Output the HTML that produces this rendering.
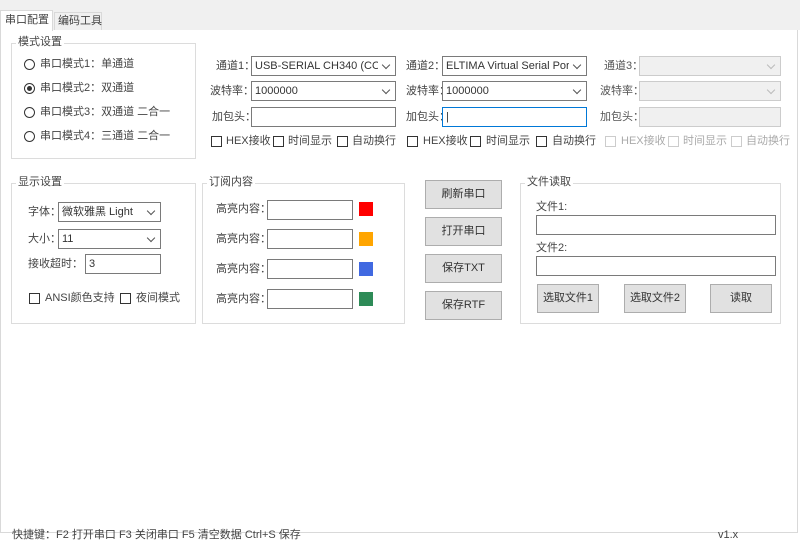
<!DOCTYPE html><html><head><meta charset="utf-8"><style>
*{box-sizing:border-box;margin:0;padding:0}
body{width:800px;height:533px;background:#fff;position:relative;overflow:hidden;font-family:"Liberation Sans","Noto Sans CJK SC",sans-serif;font-size:11px;line-height:13px;color:#444}
.a{position:absolute;white-space:nowrap}
.g{position:absolute;border:1px solid #dcdcdc}
.gt{position:absolute;background:#fff;padding:0 2px;top:-8px;left:4px;font-size:11px;color:#444}
.cb{position:absolute;border:1px solid #7a7a7a;background:#fff;height:20px;padding:2px 3px;font-size:11px;line-height:14px;color:#333;overflow:hidden;white-space:nowrap}
.cb.sel:before{content:"";position:absolute;right:0;top:0;width:17px;height:18px;background:inherit}
.cb.sel:after{content:"";position:absolute;right:6px;top:5px;width:5px;height:5px;border-right:1px solid #555;border-bottom:1px solid #555;transform:rotate(45deg)}
.dis{background:#f0f0f0;border-color:#ccc}
.dis:after{border-color:#bbb!important}
.ck{position:absolute;width:11px;height:11px;border:1px solid #333;background:#fff}
.ck.d{border-color:#ccc}
.rd{position:absolute;width:11px;height:11px;border:1px solid #333;border-radius:50%;background:#fff}
.bt{position:absolute;background:#e1e1e1;border:1px solid #adadad;text-align:center;font-size:11px;color:#333}
.sq{position:absolute;width:14px;height:14px}
.lg{color:#aaa}
</style></head><body>
<div class="a" style="left:0;top:0;width:800px;height:10px;background:#f0f0f0"></div>
<div class="a" style="left:0;top:10px;width:800px;height:20px;background:#f0f0f0"></div>
<div class="a" style="left:0;top:10px;width:53px;height:21px;background:#fff;border:1px solid #d9d9d9;border-bottom:none;padding:3px 4px">串口配置</div>
<div class="a" style="left:54px;top:12px;width:48px;height:18px;border:1px solid #d9d9d9;border-bottom:none;padding:2px 3px">编码工具</div>
<div class="a" style="left:0;top:30px;width:798px;height:503px;border:1px solid #d9d9d9;border-top:none"></div>

<div class="g" style="left:11px;top:43px;width:185px;height:116px"><span class="gt">模式设置</span></div>
<div class="rd" style="left:24px;top:59px"></div><div class="a" style="left:40px;top:58px">串口模式1：单通道</div>
<div class="rd" style="left:24px;top:83px"><div style="position:absolute;left:2px;top:2px;width:5px;height:5px;border-radius:50%;background:#333"></div></div><div class="a" style="left:40px;top:82px">串口模式2：双通道</div>
<div class="rd" style="left:24px;top:107px"></div><div class="a" style="left:40px;top:106px">串口模式3：双通道 二合一</div>
<div class="rd" style="left:24px;top:131px"></div><div class="a" style="left:40px;top:130px">串口模式4：三通道 二合一</div>

<div class="a" style="left:216px;top:60px">通道1：</div><div class="cb sel" style="left:251px;top:56px;width:145px">USB-SERIAL CH340 (COMS</div>
<div class="a" style="left:210px;top:85px">波特率：</div><div class="cb sel" style="left:251px;top:81px;width:145px">1000000</div>
<div class="a" style="left:212px;top:111px">加包头：</div><div class="cb" style="left:251px;top:107px;width:145px"></div>
<div class="ck" style="left:211px;top:136px"></div><div class="a" style="left:226px;top:135px">HEX接收</div>
<div class="ck" style="left:273px;top:136px"></div><div class="a" style="left:288px;top:135px">时间显示</div>
<div class="ck" style="left:337px;top:136px"></div><div class="a" style="left:352px;top:135px">自动换行</div>

<div class="a" style="left:406px;top:60px">通道2：</div><div class="cb sel" style="left:442px;top:56px;width:145px">ELTIMA Virtual Serial Port (</div>
<div class="a" style="left:406px;top:85px">波特率：</div><div class="cb sel" style="left:442px;top:81px;width:145px">1000000</div>
<div class="a" style="left:406px;top:111px">加包头：</div><div class="cb" style="left:442px;top:107px;width:145px;border-color:#0078d7">|</div>
<div class="ck" style="left:407px;top:136px"></div><div class="a" style="left:423px;top:135px">HEX接收</div>
<div class="ck" style="left:470px;top:136px"></div><div class="a" style="left:486px;top:135px">时间显示</div>
<div class="ck" style="left:536px;top:136px"></div><div class="a" style="left:552px;top:135px">自动换行</div>

<div class="a" style="left:604px;top:60px;color:#555">通道3：</div><div class="cb sel dis" style="left:639px;top:56px;width:142px"></div>
<div class="a" style="left:600px;top:85px;color:#555">波特率：</div><div class="cb sel dis" style="left:639px;top:81px;width:142px"></div>
<div class="a" style="left:600px;top:111px;color:#555">加包头：</div><div class="cb dis" style="left:639px;top:107px;width:142px"></div>
<div class="ck d" style="left:605px;top:136px"></div><div class="a lg" style="left:621px;top:135px">HEX接收</div>
<div class="ck d" style="left:668px;top:136px"></div><div class="a lg" style="left:683px;top:135px">时间显示</div>
<div class="ck d" style="left:731px;top:136px"></div><div class="a lg" style="left:746px;top:135px">自动换行</div>

<div class="g" style="left:11px;top:183px;width:185px;height:141px"><span class="gt">显示设置</span></div>
<div class="a" style="left:28px;top:206px">字体：</div><div class="cb sel" style="left:58px;top:202px;width:103px">微软雅黑 Light</div>
<div class="a" style="left:28px;top:233px">大小：</div><div class="cb sel" style="left:58px;top:229px;width:103px">11</div>
<div class="a" style="left:28px;top:258px">接收超时：</div><div class="cb" style="left:85px;top:254px;width:76px">3</div>
<div class="ck" style="left:29px;top:293px"></div><div class="a" style="left:45px;top:292px">ANSI颜色支持</div>
<div class="ck" style="left:120px;top:293px"></div><div class="a" style="left:136px;top:292px">夜间模式</div>

<div class="g" style="left:202px;top:183px;width:203px;height:141px"><span class="gt">订阅内容</span></div>
<div class="a" style="left:216px;top:203px">高亮内容：</div><div class="cb" style="left:267px;top:200px;width:86px"></div><div class="sq" style="left:359px;top:202px;background:#f00"></div>
<div class="a" style="left:216px;top:233px">高亮内容：</div><div class="cb" style="left:267px;top:229px;width:86px"></div><div class="sq" style="left:359px;top:232px;background:#ffa500"></div>
<div class="a" style="left:216px;top:263px">高亮内容：</div><div class="cb" style="left:267px;top:259px;width:86px"></div><div class="sq" style="left:359px;top:262px;background:#4169e1"></div>
<div class="a" style="left:216px;top:293px">高亮内容：</div><div class="cb" style="left:267px;top:289px;width:86px"></div><div class="sq" style="left:359px;top:292px;background:#2e8b57"></div>

<div class="bt" style="left:425px;top:180px;width:77px;height:29px;line-height:27px">刷新串口</div>
<div class="bt" style="left:425px;top:217px;width:77px;height:29px;line-height:27px">打开串口</div>
<div class="bt" style="left:425px;top:254px;width:77px;height:29px;line-height:27px">保存TXT</div>
<div class="bt" style="left:425px;top:291px;width:77px;height:29px;line-height:27px">保存RTF</div>

<div class="g" style="left:520px;top:183px;width:261px;height:141px"><span class="gt">文件读取</span></div>
<div class="a" style="left:536px;top:201px">文件1:</div><div class="cb" style="left:536px;top:215px;width:240px"></div>
<div class="a" style="left:536px;top:242px">文件2:</div><div class="cb" style="left:536px;top:256px;width:240px"></div>
<div class="bt" style="left:537px;top:284px;width:62px;height:29px;line-height:27px">选取文件1</div>
<div class="bt" style="left:624px;top:284px;width:62px;height:29px;line-height:27px">选取文件2</div>
<div class="bt" style="left:710px;top:284px;width:62px;height:29px;line-height:27px">读取</div>

<div class="a" style="left:12px;top:529px;color:#444">快捷键：F2 打开串口  F3 关闭串口  F5 清空数据  Ctrl+S 保存</div>
<div class="a" style="left:718px;top:529px;color:#444">v1.x</div>
</body></html>
